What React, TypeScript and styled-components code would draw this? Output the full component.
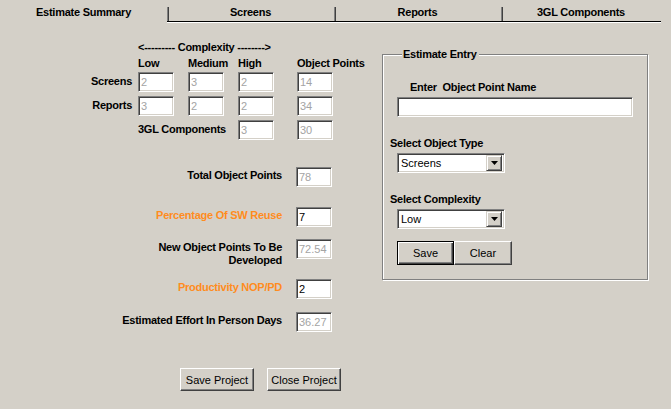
import React from "react";
import styled, {createGlobalStyle} from "styled-components";

const GlobalStyle = createGlobalStyle`
    body {
        margin: 0;
        background: #d4d0c8;
        font-family: "Liberation Sans", Arial, sans-serif;
        font-size: 11px;
    }
`

const Window = styled.div`
    width: 671px;
    height: 409px;
    background: #d4d0c8;
    overflow: hidden;
    color: #000;
`

const TabBar = styled.div`
    display: grid;
    grid-template-columns: 167px 167px 167px 160px;
    height: 23px;
`

const Tab = styled.div<{ $active?: boolean }>`
    position: relative;
    height: 22px;
    box-sizing: border-box;
    display: flex;
    justify-content: center;
    align-items: flex-start;
    padding-top: 6px;
    font-weight: bold;
    letter-spacing: -0.25px;
    line-height: 13px;
    border-bottom: ${p => p.$active ? "none" : "1px solid #000"};
    box-shadow: ${p => p.$active ? "none" : "0 1px 0 #fff"};

    &::before {
        content: "";
        display: ${p => p.$active ? "none" : "block"};
        position: absolute;
        left: 0;
        top: 7px;
        bottom: 0;
        width: 1px;
        background: #808080;
        border-right: 1px solid #404040;
    }
`

const Body = styled.div`
    display: flex;
`

const LeftPane = styled.div`
    width: 382px;
    display: flex;
    flex-direction: column;
`

const ComplexityGrid = styled.div`
    display: grid;
    grid-template-columns: 138px 50px 50px 59px 36px;
    grid-template-rows: 14px 16px 24px 24px 20px;
    align-items: start;
    margin-top: 18px;
    font-weight: bold;
    letter-spacing: -0.25px;
`

const Caption = styled.div`
    grid-column: 2 / 5;
    line-height: 13px;
    white-space: nowrap;
`

const ColHead = styled.div`
    line-height: 16px;
    white-space: nowrap;
`

const RowLabel = styled.div<{ $span?: number }>`
    grid-column: ${p => p.$span ? `span ${p.$span}` : "auto"};
    line-height: 18px;
    margin-top: 1px;
    text-align: ${p => p.$span ? "left" : "right"};
    padding-right: ${p => p.$span ? "0" : "6px"};
    white-space: nowrap;
`

const Field = styled.input<{ $width?: number; $dim?: boolean }>`
    width: ${p => p.$width || 36}px;
    height: 20px;
    box-sizing: border-box;
    margin: 1px 0 0 0;
    padding: 0 0 0 2px;
    border: 1px solid;
    border-color: #808080 #fff #fff #808080;
    box-shadow: inset 1px 1px #404040, inset -1px -1px #d4d0c8;
    background: #fff;
    font-family: "Liberation Sans", Arial, sans-serif;
    font-size: 11px;
    font-weight: normal;
    letter-spacing: 0;
    color: ${p => p.$dim ? "#a4a4a4" : "#000"};
    outline: none;
`

const SummaryList = styled.div`
    display: flex;
    flex-direction: column;
`

const SummaryRow = styled.div<{ $gap: number }>`
    display: grid;
    grid-template-columns: 282px 36px;
    column-gap: 14px;
    align-items: start;
    margin-top: ${p => p.$gap}px;
`

const SummaryLabel = styled.div<{ $accent?: boolean }>`
    text-align: right;
    font-weight: bold;
    letter-spacing: -0.25px;
    line-height: 13px;
    padding-top: 2px;
    color: ${p => p.$accent ? "#ff8c1e" : "#000"};

    & + input {
        margin-top: 0;
    }
`

const Footer = styled.div`
    display: flex;
    gap: 13px;
    padding-left: 180px;
    margin-top: 36px;
`

const Button = styled.button<{ $width: number; $height?: number; $default?: boolean }>`
    width: ${p => p.$width}px;
    height: ${p => p.$height || 23}px;
    box-sizing: border-box;
    padding: 0;
    background: #d4d0c8;
    font-family: "Liberation Sans", Arial, sans-serif;
    font-size: 11px;
    color: #000;
    border: 1px solid;
    border-color: ${p => p.$default ? "#000" : "#fff #404040 #404040 #fff"};
    box-shadow: ${p => p.$default
        ? "inset 1px 1px #fff, inset -1px -1px #404040, inset -2px -2px #808080"
        : "inset -1px -1px #808080"};
`

const RightPane = styled.div`
    padding-top: 25px;
`

const GroupBox = styled.fieldset`
    width: 266px;
    box-sizing: border-box;
    margin: 0;
    padding: 0 0 14px 14px;
    border: 1px solid #808080;
    box-shadow: inset 1px 1px #fff, 1px 1px #fff;
`

const Legend = styled.legend`
    margin-left: 5px;
    padding: 0 2px 0 1px;
    font-weight: bold;
    letter-spacing: -0.25px;
    line-height: 13px;
    background: #d4d0c8;
`

const EntryLabel = styled.div<{ $gap: number; $indent?: number }>`
    font-weight: bold;
    letter-spacing: -0.25px;
    line-height: 13px;
    margin-top: ${p => p.$gap}px;
    margin-left: ${p => p.$indent || 0}px;
`

const NameField = styled(Field)`
    display: block;
    width: 236px;
    margin-top: 3px;
`

const Combo = styled.div`
    display: flex;
    align-items: center;
    width: 108px;
    height: 20px;
    box-sizing: border-box;
    margin-top: 3px;
    border: 1px solid;
    border-color: #808080 #fff #fff #808080;
    box-shadow: inset 1px 1px #404040, inset -1px -1px #d4d0c8;
    background: #fff;
    padding: 2px 2px 2px 3px;
`

const ComboText = styled.span`
    flex: 1;
    line-height: 14px;
`

const ComboArrow = styled.div`
    width: 16px;
    height: 16px;
    box-sizing: border-box;
    display: flex;
    align-items: center;
    justify-content: center;
    background: #d4d0c8;
    border: 1px solid;
    border-color: #d4d0c8 #404040 #404040 #d4d0c8;
    box-shadow: inset 1px 1px #fff, inset -1px -1px #808080;
`

const ButtonRow = styled.div`
    display: flex;
    margin-top: 12px;
`

function ComboBox({value}: { value: string }) {
    return (
        <Combo>
            <ComboText>{value}</ComboText>
            <ComboArrow>
                <svg width="7" height="4" viewBox="0 0 7 4">
                    <path d="M0 0h7L3.5 4z" fill="#000"/>
                </svg>
            </ComboArrow>
        </Combo>
    )
}

export default function App() {
    return (
        <Window>
            <GlobalStyle/>
            <TabBar>
                <Tab $active>Estimate Summary</Tab>
                <Tab>Screens</Tab>
                <Tab>Reports</Tab>
                <Tab>3GL Components</Tab>
            </TabBar>

            <Body>
                <LeftPane>
                    <ComplexityGrid>
                        <div/>
                        <Caption>&lt;--------- Complexity --------&gt;</Caption>
                        <div/>

                        <div/>
                        <ColHead>Low</ColHead>
                        <ColHead>Medium</ColHead>
                        <ColHead>High</ColHead>
                        <ColHead>Object Points</ColHead>

                        <RowLabel>Screens</RowLabel>
                        <Field readOnly $dim value="2"/>
                        <Field readOnly $dim value="3"/>
                        <Field readOnly $dim value="2"/>
                        <Field readOnly $dim value="14"/>

                        <RowLabel>Reports</RowLabel>
                        <Field readOnly $dim value="3"/>
                        <Field readOnly $dim value="2"/>
                        <Field readOnly $dim value="2"/>
                        <Field readOnly $dim value="34"/>

                        <div/>
                        <RowLabel $span={2}>3GL Components</RowLabel>
                        <Field readOnly $dim value="3"/>
                        <Field readOnly $dim value="30"/>
                    </ComplexityGrid>

                    <SummaryList>
                        <SummaryRow $gap={28}>
                            <SummaryLabel>Total Object Points</SummaryLabel>
                            <Field readOnly $dim value="78"/>
                        </SummaryRow>
                        <SummaryRow $gap={20}>
                            <SummaryLabel $accent>Percentage Of SW Reuse</SummaryLabel>
                            <Field readOnly value="7"/>
                        </SummaryRow>
                        <SummaryRow $gap={12}>
                            <SummaryLabel>New Object Points To Be<br/>Developed</SummaryLabel>
                            <Field readOnly $dim value="72.54"/>
                        </SummaryRow>
                        <SummaryRow $gap={12}>
                            <SummaryLabel $accent>Productivity NOP/PD</SummaryLabel>
                            <Field readOnly value="2"/>
                        </SummaryRow>
                        <SummaryRow $gap={13}>
                            <SummaryLabel>Estimated Effort In Person Days</SummaryLabel>
                            <Field readOnly $dim value="36.27"/>
                        </SummaryRow>
                    </SummaryList>

                    <Footer>
                        <Button $width={74}>Save Project</Button>
                        <Button $width={74}>Close Project</Button>
                    </Footer>
                </LeftPane>

                <RightPane>
                    <GroupBox>
                        <Legend>Estimate Entry</Legend>
                        <EntryLabel $gap={20} $indent={13}>Enter&nbsp; Object Point Name</EntryLabel>
                        <NameField readOnly value=""/>

                        <EntryLabel $gap={20} $indent={-7}>Select Object Type</EntryLabel>
                        <ComboBox value="Screens"/>

                        <EntryLabel $gap={20} $indent={-7}>Select Complexity</EntryLabel>
                        <ComboBox value="Low"/>

                        <ButtonRow>
                            <Button $width={57} $height={24} $default>Save</Button>
                            <Button $width={58} $height={24}>Clear</Button>
                        </ButtonRow>
                    </GroupBox>
                </RightPane>
            </Body>
        </Window>
    )
}
